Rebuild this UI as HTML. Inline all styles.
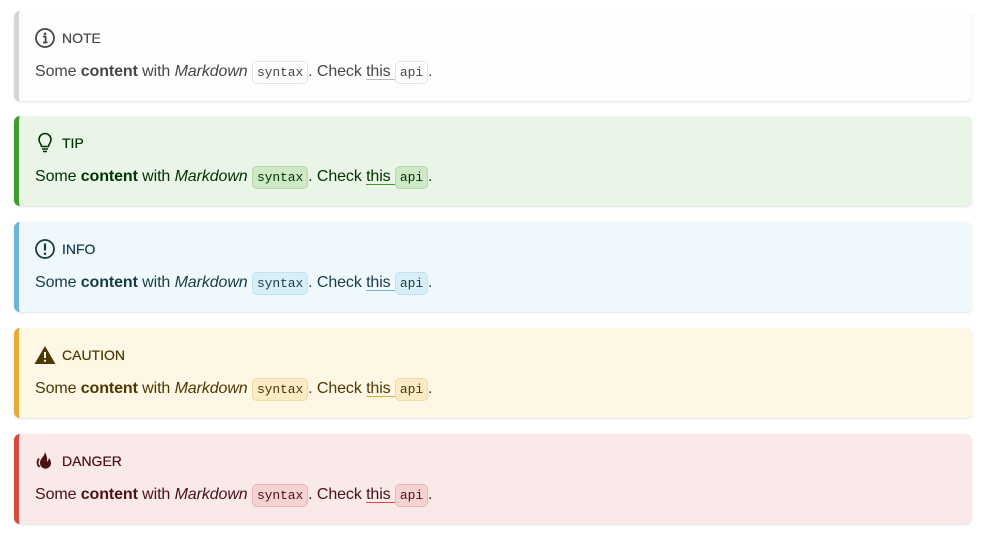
<!DOCTYPE html>
<html><head><meta charset="utf-8"><style>
*{box-sizing:border-box;margin:0;padding:0}
body{width:987px;height:541px;background:#fff;font-family:"Liberation Sans",sans-serif;font-size:16px;overflow:hidden}
.ad{position:absolute;left:14px;width:958px;height:90px;border-left:5px solid;border-radius:6px;padding:16px 16px 0 16px;box-shadow:0 1px 2px rgba(0,0,0,.12)}
.h{display:flex;align-items:center;height:22px;font-size:14px;font-weight:normal;text-transform:uppercase;text-shadow:0 0 0.4px currentColor}
.h svg{width:22px;height:22px;margin-right:6px;margin-left:-1px}
.b{margin-top:12px;line-height:22px;letter-spacing:-0.1px}
.b b{font-weight:bold}
code{font-family:"Liberation Mono",monospace;font-size:13px;padding:3px 4px;border-radius:5px;border:1px solid rgba(0,0,0,.1)}
a{color:inherit;text-decoration:underline;text-underline-offset:3px}
.note{top:11px;background:#fdfdfd;border-color:#d4d5d8;color:#474748}
.note code{background:#fdfdfd}.note a{text-decoration-color:#bbb}
.tip{top:116px;background:#e9f5e6;border-color:#3f9c2a;color:#003100}
.tip code{background:#cfe8c8;border-color:#b5d9ab}.tip a{text-decoration-color:#3f9c2a}
.info{top:222px;background:#eef8fd;border-color:#6db4d6;color:#193c47}
.info code{background:#d8eef8;border-color:#bfe1f0}.info a{text-decoration-color:#6db4d6}
.caution{top:328px;background:#fef7e6;border-color:#e4ac37;color:#4d3800}
.caution code{background:#fbecc6;border-color:#f0d9a4}.caution a{text-decoration-color:#e4ac37}
.danger{top:434px;background:#fae9e9;border-color:#d9483f;color:#4b1113}
.danger code{background:#f7d2d2;border-color:#ebb8b8}.danger a{text-decoration-color:#d9483f}
</style></head><body>
<div class="ad note"><div class="h"><svg viewBox="0 0 22 22"><circle cx="11" cy="11" r="9" fill="none" stroke="#474748" stroke-width="1.8"/><circle cx="11" cy="6.8" r="1.3" fill="#474748"/><path d="M9 9.5h2.6v5.5M9 15.5h4.6" fill="none" stroke="#474748" stroke-width="1.8"/></svg>Note</div>
<div class="b">Some <b>content</b> with <i>Markdown</i> <code>syntax</code>. Check <a>this </a><code>api</code>.</div></div>
<div class="ad tip"><div class="h"><svg viewBox="0 0 22 22"><path d="M7.5 14.5c0-2.5-2.5-3.5-2.5-7A6 6 0 0 1 17 7.5c0 3.5-2.5 4.5-2.5 7z" fill="none" stroke="#003100" stroke-width="1.6" stroke-linejoin="round"/><path d="M8 17h6M9 19.5h4" stroke="#003100" stroke-width="1.6"/></svg>Tip</div>
<div class="b">Some <b>content</b> with <i>Markdown</i> <code>syntax</code>. Check <a>this </a><code>api</code>.</div></div>
<div class="ad info"><div class="h"><svg viewBox="0 0 22 22"><circle cx="11" cy="11" r="9" fill="none" stroke="#193c47" stroke-width="1.8"/><path d="M11 5.5v7" stroke="#193c47" stroke-width="2.2"/><circle cx="11" cy="15.8" r="1.3" fill="#193c47"/></svg>Info</div>
<div class="b">Some <b>content</b> with <i>Markdown</i> <code>syntax</code>. Check <a>this </a><code>api</code>.</div></div>
<div class="ad caution"><div class="h"><svg viewBox="0 0 22 22"><path d="M11 2L21.5 20H0.5z" fill="#4d3800"/><path d="M11 8v6" stroke="#fef7e6" stroke-width="2"/><circle cx="11" cy="16.8" r="1.2" fill="#fef7e6"/></svg>Caution</div>
<div class="b">Some <b>content</b> with <i>Markdown</i> <code>syntax</code>. Check <a>this </a><code>api</code>.</div></div>
<div class="ad danger"><div class="h"><svg viewBox="0 0 22 22"><path d="M10.5 1.5c1.5 4-4.5 6.5-4.5 11.5a5.5 5.5 0 0 0 11 .3c0-2.7-1.2-4.3-2.2-5.3 0 2-1 3.2-2 3.7 1-3.2-.5-7.5-2.3-10.2z" fill="#4b1113"/><path d="M5 8.5c-2 2.5-2 6 .5 8.5" fill="none" stroke="#4b1113" stroke-width="1.8"/></svg>Danger</div>
<div class="b">Some <b>content</b> with <i>Markdown</i> <code>syntax</code>. Check <a>this </a><code>api</code>.</div></div>
</body></html>
